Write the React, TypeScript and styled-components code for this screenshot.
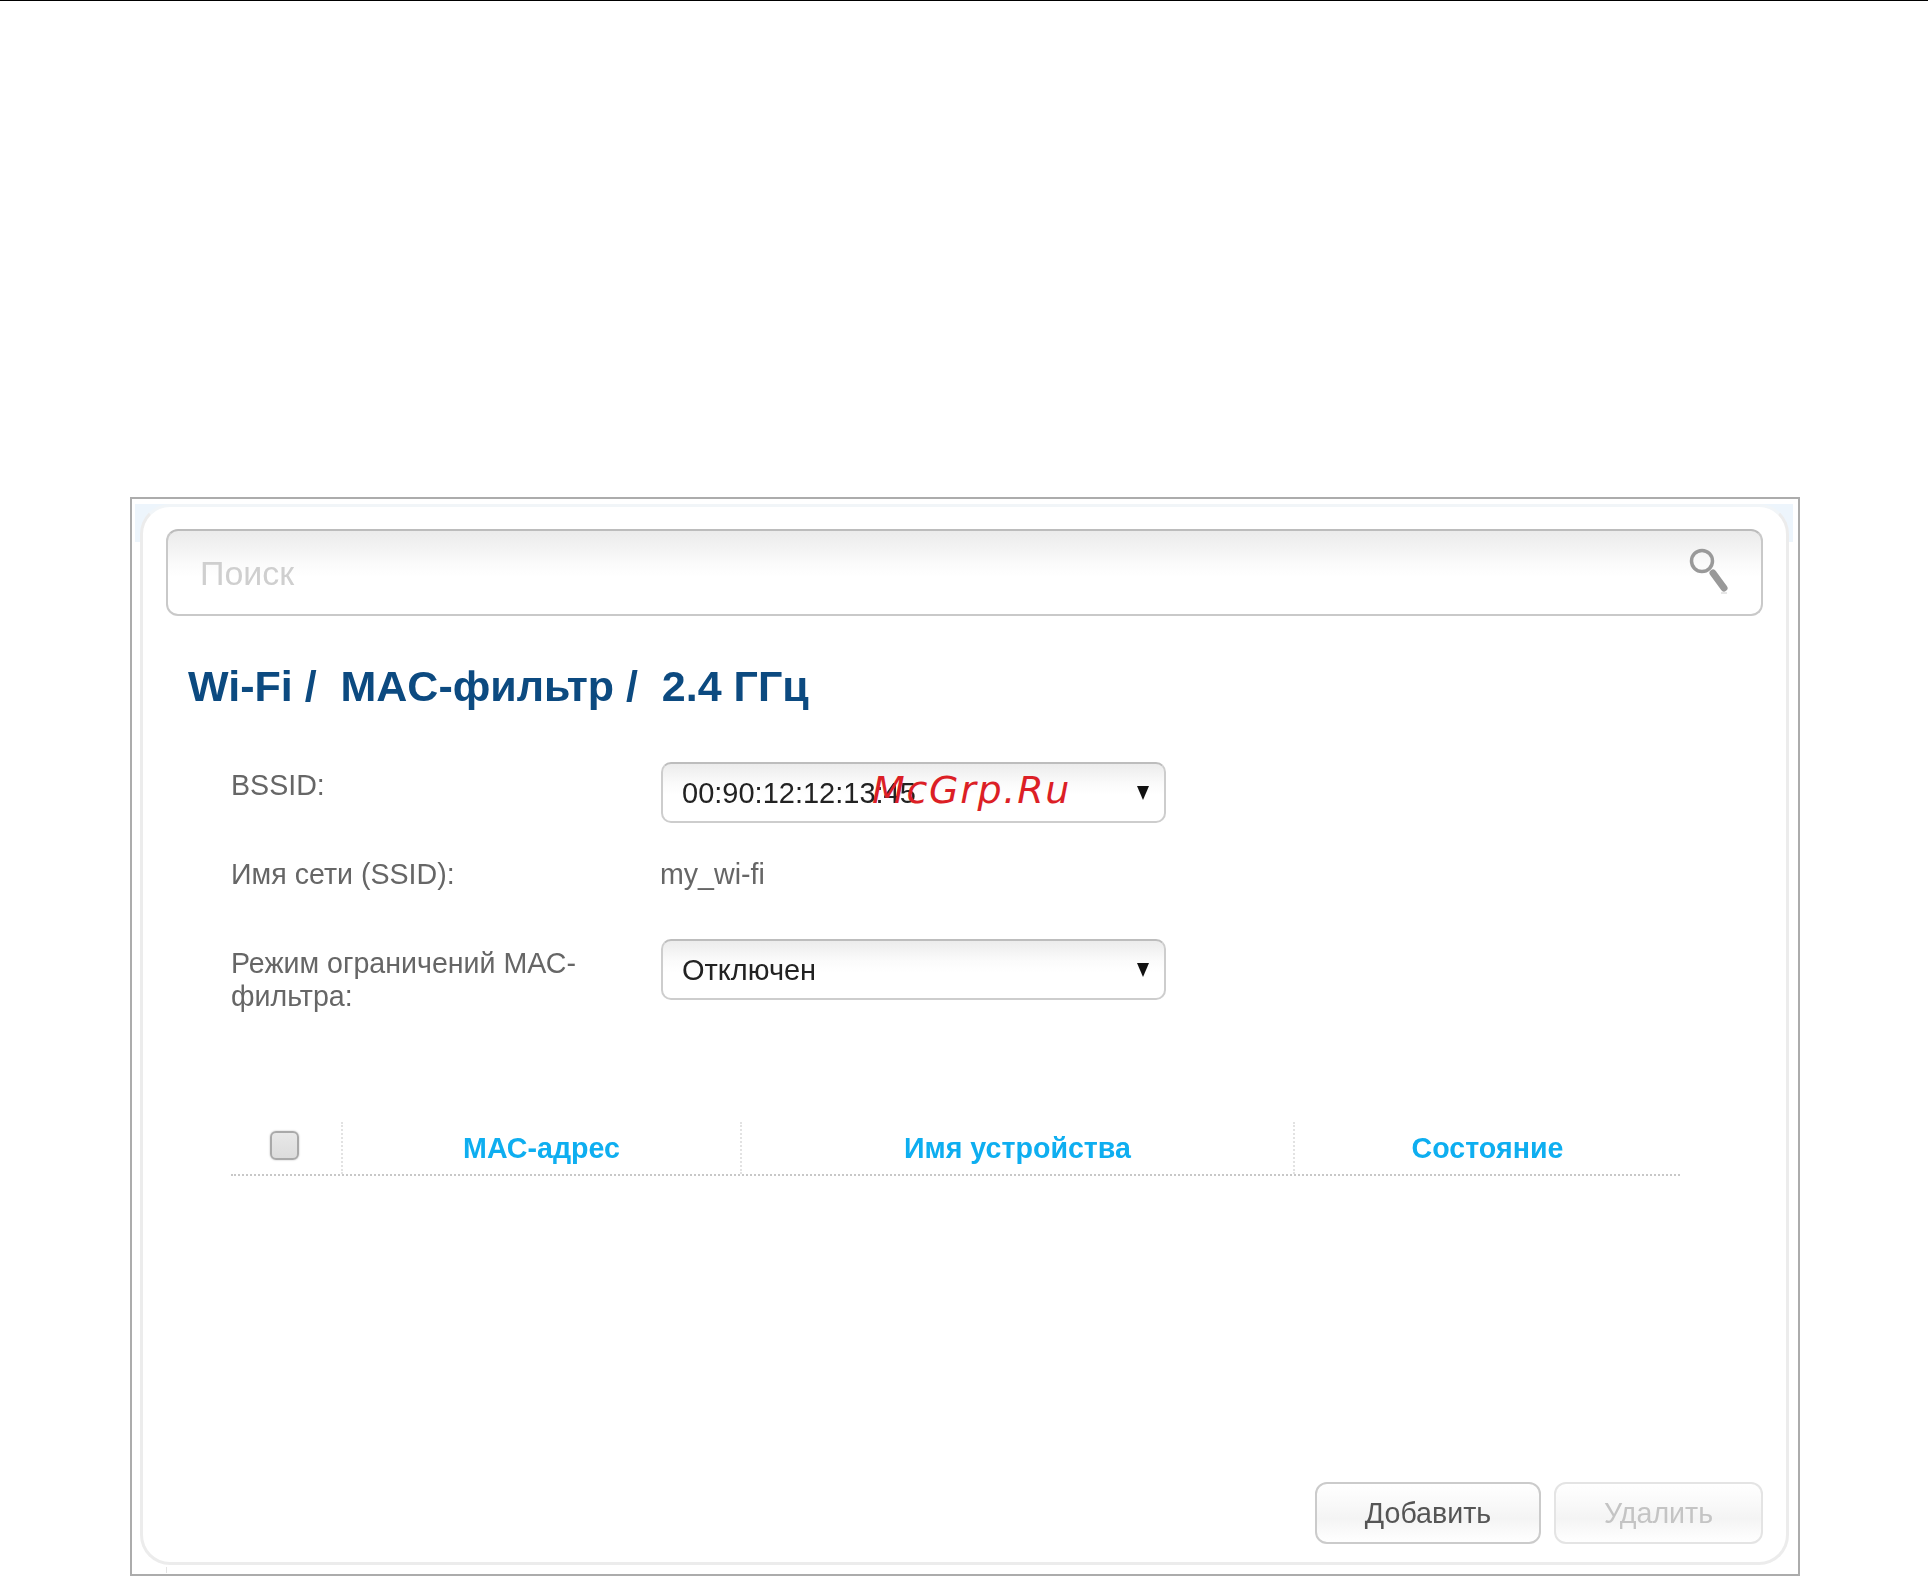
import styled, { createGlobalStyle } from 'styled-components';

const GlobalStyle = createGlobalStyle`
  html, body {
    margin: 0;
    padding: 0;
    background: #fff;
    font-family: "Liberation Sans", Arial, sans-serif;
  }
`;

const Page = styled.div`
  position: relative;
  width: 1928px;
  height: 1577px;
  overflow: hidden;
  border-top: 1px solid #000;
  box-sizing: border-box;
  padding: 496px 0 0 130px;
`;

const Frame = styled.div`
  width: 1670px;
  height: 1079px;
  box-sizing: border-box;
  border: 2px solid #acacac;
  padding: 5px 5px 9px 3px;
  background: #fff;
`;

const Backdrop = styled.div`
  height: 100%;
  box-sizing: border-box;
  background: linear-gradient(#edf5fc, #edf5fc) top / 100% 38px no-repeat;
  padding: 0 4px 0 5px;
`;

const Card = styled.div`
  height: 100%;
  box-sizing: border-box;
  background: #fff;
  border: 3px solid #ececec;
  border-top-color: #f1f5f8;
  border-radius: 30px;
  padding: 22px 23px 18px 23px;
  display: flex;
  flex-direction: column;
  filter: blur(0.6px);
`;

const SearchBar = styled.div`
  height: 87px;
  flex: none;
  box-sizing: border-box;
  display: flex;
  align-items: center;
  justify-content: space-between;
  padding: 0 31px 0 32px;
  border: 2px solid #c9c9c9;
  border-top-color: #bcbcbc;
  border-radius: 12px;
  background: linear-gradient(#ebebeb 0%, #fafafa 38%, #fff 55%);
`;

const SearchInput = styled.input`
  flex: 1;
  border: 0;
  outline: 0;
  padding: 2px 0 0;
  background: transparent;
  font: 34px "Liberation Sans", Arial, sans-serif;
  color: #ccc;

  &::placeholder {
    color: #cfcfcf;
    opacity: 1;
  }
`;

const SearchGlyph = styled.svg`
  margin-top: -3px;
`;

const Title = styled.h1`
  margin: 42px 0 0 22px;
  font-size: 43px;
  line-height: 56px;
  font-weight: 700;
  color: #0c4a80;
  white-space: pre;
`;

const Form = styled.div`
  margin: 48px 0 0 65px;
  display: grid;
  grid-template-columns: 430px 505px;
`;

const Label = styled.div<{ $top: number; $height: number }>`
  height: ${p => p.$height}px;
  padding-top: ${p => p.$top}px;
  box-sizing: border-box;
  font-size: 28.6px;
  line-height: 33px;
  color: #666;
  width: 370px;
`;

const Value = styled.div<{ $height: number }>`
  height: ${p => p.$height}px;
  padding-top: 8px;
  box-sizing: border-box;
  font-size: 28.6px;
  line-height: 33px;
  color: #666;
  margin-left: -1px;
`;

const SelectCell = styled.div<{ $height: number }>`
  height: ${p => p.$height}px;
`;

const SelectBox = styled.div`
  height: 61px;
  box-sizing: border-box;
  display: flex;
  align-items: center;
  justify-content: space-between;
  padding: 2px 15px 0 19px;
  border: 2px solid #cdcdcd;
  border-top-color: #bdbdbd;
  border-radius: 10px;
  background: linear-gradient(#ececec 0%, #fbfbfb 35%, #fff 55%);
  font-size: 29px;
  color: #222;
`;

const Arrow = styled.span`
  width: 0;
  height: 0;
  margin-top: -2px;
  border-left: 6.5px solid transparent;
  border-right: 6.5px solid transparent;
  border-top: 14px solid #111;
`;

const Table = styled.div`
  margin: 108px 0 0 65px;
  width: 1449px;
  height: 52px;
  flex: none;
  display: grid;
  grid-template-columns: 110px 399px 553px 387px;
  border-bottom: 2px dotted #c8c8c8;
`;

const HeadCell = styled.div<{ $first?: boolean }>`
  display: flex;
  align-items: center;
  justify-content: center;
  padding-top: 1px;
  border-left: ${p => (p.$first ? '0' : '2px dotted #e2e2e2')};
  font-size: 28.6px;
  font-weight: 700;
  color: #0eaef0;
`;

const CheckBox = styled.span`
  width: 29px;
  height: 29px;
  margin: -6px 0 0 -3px;
  box-sizing: border-box;
  border: 2px solid #a9a9a9;
  border-radius: 6px;
  background: linear-gradient(#e8e8e8, #dcdcdc);
  box-shadow: 0 0 2px #bbb;
`;

const Actions = styled.div`
  margin-top: auto;
  display: flex;
  justify-content: flex-end;
  gap: 13px;
`;

const Button = styled.div<{ $off?: boolean; $width: number }>`
  width: ${p => p.$width}px;
  height: 62px;
  box-sizing: border-box;
  display: flex;
  align-items: center;
  justify-content: center;
  border: 2px solid ${p => (p.$off ? '#e4e4e4' : '#cbcbcb')};
  border-radius: 12px;
  background: linear-gradient(#fff 0%, #f4f4f4 60%, #fff 100%);
  font-size: 28.6px;
  color: ${p => (p.$off ? '#c4c4c4' : '#555')};
`;

const Tick = styled.span`
  position: absolute;
  left: 166px;
  top: 1566px;
  width: 1px;
  height: 6px;
  background: #e4e4e4;
`;

const Watermark = styled.span`
  position: absolute;
  left: 872px;
  top: 766px;
  font-family: "DejaVu Sans", Verdana, sans-serif;
  font-style: italic;
  font-size: 38px;
  line-height: 46px;
  letter-spacing: 1.7px;
  color: #dc1f26;
`;

const SearchIcon = () => (
  <SearchGlyph width="42" height="48" viewBox="0 0 42 48" fill="none">
    <circle cx="14" cy="14" r="10.5" stroke="#999" strokeWidth="3.5" />
    <path d="M25 26 L36 41" stroke="#999" strokeWidth="7" strokeLinecap="round" />
    <path d="M33 46 L39 46" stroke="#e6e6e6" strokeWidth="2" />
  </SearchGlyph>
);

export default function App() {
  return (
    <>
      <GlobalStyle />
      <Page>
        <Frame>
          <Backdrop>
            <Card>
              <SearchBar>
                <SearchInput placeholder="Поиск" readOnly />
                <SearchIcon />
              </SearchBar>
              <Title>{'Wi-Fi /  MAC-фильтр /  2.4 ГГц'}</Title>
              <Form>
                <Label $top={7} $height={88}>BSSID:</Label>
                <SelectCell $height={88}>
                  <SelectBox>
                    00:90:12:12:13:45
                    <Arrow />
                  </SelectBox>
                </SelectCell>
                <Label $top={8} $height={89}>Имя сети (SSID):</Label>
                <Value $height={89}>my_wi-fi</Value>
                <Label $top={8} $height={75}>Режим ограничений МАС-фильтра:</Label>
                <SelectCell $height={75}>
                  <SelectBox>
                    Отключен
                    <Arrow />
                  </SelectBox>
                </SelectCell>
              </Form>
              <Table>
                <HeadCell $first>
                  <CheckBox />
                </HeadCell>
                <HeadCell>МАС-адрес</HeadCell>
                <HeadCell>Имя устройства</HeadCell>
                <HeadCell>Состояние</HeadCell>
              </Table>
              <Actions>
                <Button $width={226}>Добавить</Button>
                <Button $width={209} $off>Удалить</Button>
              </Actions>
            </Card>
          </Backdrop>
        </Frame>
        <Tick />
        <Watermark>McGrp.Ru</Watermark>
      </Page>
    </>
  );
}
